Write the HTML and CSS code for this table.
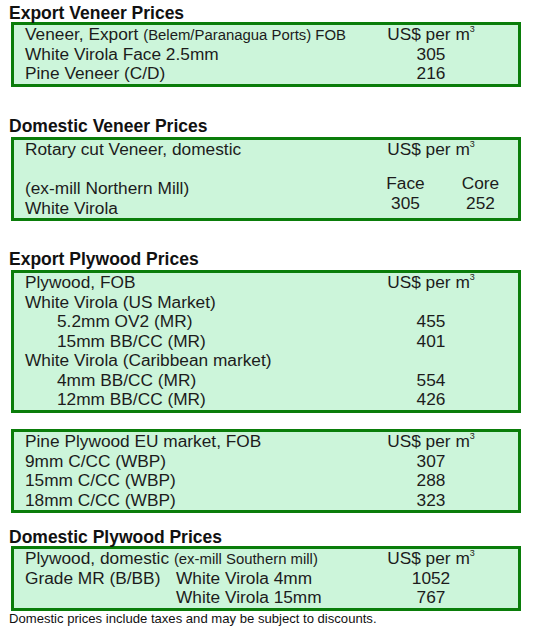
FILE: index.html
```html
<!DOCTYPE html>
<html>
<head>
<meta charset="utf-8">
<link rel="stylesheet" href="styles.css">
</head>
<body>
<div class="page">
  <h2 class="title t1">Export Veneer Prices</h2>
  <div class="box b1">
    <div class="row"><span class="lbl">Veneer, Export <small>(Belem/Paranagua Ports) FOB</small></span><span class="val">US$ per m<sup>3</sup></span></div>
    <div class="row"><span class="lbl">White Virola Face 2.5mm</span><span class="val">305</span></div>
    <div class="row"><span class="lbl">Pine Veneer (C/D)</span><span class="val">216</span></div>
  </div>

  <h2 class="title t2">Domestic Veneer Prices</h2>
  <div class="box b2">
    <div class="row"><span class="lbl">Rotary cut Veneer, domestic</span><span class="val">US$ per m<sup>3</sup></span></div>
    <div class="row empty"></div>
    <div class="split">
      <div class="lcol">
        <div class="row"><span class="lbl">(ex-mill Northern Mill)</span></div>
        <div class="row"><span class="lbl">White Virola</span></div>
      </div>
      <div class="pair">
        <div class="pc"><span>Face</span><span>305</span></div>
        <div class="pc"><span>Core</span><span>252</span></div>
      </div>
    </div>
  </div>

  <h2 class="title t3">Export Plywood Prices</h2>
  <div class="box b3">
    <div class="row"><span class="lbl">Plywood, FOB</span><span class="val">US$ per m<sup>3</sup></span></div>
    <div class="row"><span class="lbl">White Virola (US Market)</span></div>
    <div class="row"><span class="lbl ind">5.2mm OV2 (MR)</span><span class="val">455</span></div>
    <div class="row"><span class="lbl ind">15mm BB/CC (MR)</span><span class="val">401</span></div>
    <div class="row"><span class="lbl">White Virola (Caribbean market)</span></div>
    <div class="row"><span class="lbl ind">4mm BB/CC (MR)</span><span class="val">554</span></div>
    <div class="row"><span class="lbl ind">12mm BB/CC (MR)</span><span class="val">426</span></div>
  </div>

  <div class="box b4">
    <div class="row"><span class="lbl">Pine Plywood EU market, FOB</span><span class="val">US$ per m<sup>3</sup></span></div>
    <div class="row"><span class="lbl">9mm C/CC (WBP)</span><span class="val">307</span></div>
    <div class="row"><span class="lbl">15mm C/CC (WBP)</span><span class="val">288</span></div>
    <div class="row"><span class="lbl">18mm C/CC (WBP)</span><span class="val">323</span></div>
  </div>

  <h2 class="title t4">Domestic Plywood Prices</h2>
  <div class="box b5">
    <div class="row"><span class="lbl">Plywood, domestic <small>(ex-mill Southern mill)</small></span><span class="val">US$ per m<sup>3</sup></span></div>
    <div class="row"><span class="lbl"><span class="grade">Grade MR (B/BB)</span>White Virola 4mm</span><span class="val">1052</span></div>
    <div class="row"><span class="lbl"><span class="grade"></span>White Virola 15mm</span><span class="val">767</span></div>
  </div>
  <p class="note">Domestic prices include taxes and may be subject to discounts.</p>
</div>
</body>
</html>
```

FILE: styles.css
```css
html, body {
  margin: 0;
  padding: 0;
  background: #ffffff;
}
.page {
  font-family: "Liberation Sans", Arial, sans-serif;
  color: #1c1c1c;
  padding: 5px 0 0 9px;
  width: 520px;
}
.title {
  margin: 0;
  font-size: 17.5px;
  font-weight: bold;
  line-height: 17px;
  color: #111;
}
.t2 { margin-top: 31px; }
.t3 { margin-top: 30px; }
.t4 { margin-top: 16px; }
.box {
  margin: 0 0 0 2px;
  width: 510px;
  border: 3px solid #0a7d0a;
  background: #ccf5da;
  padding: 0 0 0 11px;
  box-sizing: border-box;
}
.b1 { margin-top: 0; }
.b2 { margin-top: 2.5px; }
.b3 { margin-top: 2px; }
.b4 { margin-top: 16.5px; }
.b5 { margin-top: 0; }
.row {
  display: flex;
  align-items: baseline;
  height: 19.5px;
  line-height: 19.5px;
  font-size: 17.3px;
}
.lbl {
  flex: 1;
  white-space: nowrap;
}
.lbl small {
  font-size: 14.9px;
}
.ind {
  padding-left: 32px;
}
.val {
  width: 120px;
  margin-right: 27px;
  text-align: center;
}
sup {
  font-size: 9px;
  line-height: 0;
  vertical-align: 8px;
}
.split {
  display: flex;
}
.lcol { flex: 1; }
.pair {
  display: flex;
  width: 150px;
  margin-right: 0;
  font-size: 17.3px;
  line-height: 20px;
  margin-top: -6px;
}
.pc {
  display: flex;
  flex-direction: column;
  align-items: center;
  width: 75px;
}
.grade {
  display: inline-block;
  width: 151px;
}
.note {
  margin: 1px 0 0 0;
  font-size: 13.1px;
  line-height: 14px;
  color: #111;
}
```
